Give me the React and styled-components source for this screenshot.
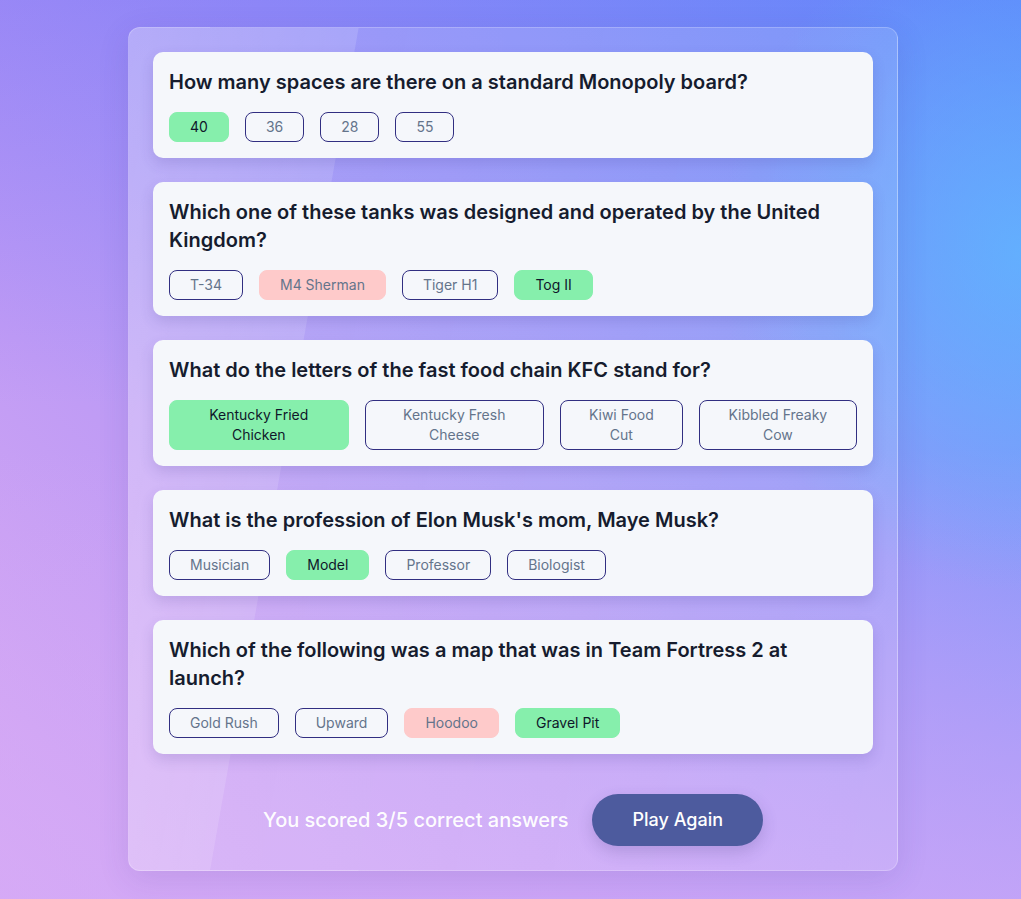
import React from "react";
import styled, { createGlobalStyle } from "styled-components";

const GlobalStyle = createGlobalStyle`
  html, body {
    margin: 0;
    padding: 0;
    min-height: 100%;
  }
  body {
    font-family: Inter, "Noto Sans", "Liberation Sans", sans-serif;
    min-height: 899px;
    background:
      radial-gradient(ellipse 300px 340px at 100% 28%, rgba(96, 182, 255, 0.8), rgba(96, 182, 255, 0) 100%),
      linear-gradient(180deg, rgba(210, 170, 248, 0) 50%, rgba(210, 170, 248, 0.65) 100%),
      linear-gradient(180deg, rgba(110, 96, 245, 0.3) 0%, rgba(110, 96, 245, 0) 45%),
      linear-gradient(45deg, #dcaaf2 0%, #c09cf5 30%, #9a96f8 60%, #5a98fd 100%);
  }
  * { box-sizing: border-box; }
`;

const Page = styled.main`
  display: flex;
  justify-content: center;
  padding: 27px 0 28px 5px;
`;

const Panel = styled.section`
  width: 770px;
  padding: 24px;
  border-radius: 12px;
  border: 1px solid rgba(255, 255, 255, 0.22);
  background: linear-gradient(
    100deg,
    rgba(255, 255, 255, 0.3) 0%,
    rgba(255, 255, 255, 0.26) 25%,
    rgba(255, 255, 255, 0.15) 25.1%,
    rgba(255, 255, 255, 0.12) 100%
  );
  box-shadow: 0 8px 32px rgba(60, 40, 140, 0.12);
  display: flex;
  flex-direction: column;
  gap: 24px;
`;

const Card = styled.article`
  background: #f5f7fb;
  border-radius: 10px;
  padding: 16px;
  box-shadow: 0 6px 14px rgba(60, 50, 140, 0.16);
  display: flex;
  flex-direction: column;
  gap: 16px;
`;

const Question = styled.h2`
  margin: 0;
  font-size: 20px;
  line-height: 28px;
  font-weight: 600;
  color: #161c2e;
`;

const Answers = styled.div`
  display: flex;
  gap: 16px;
  align-items: stretch;
`;

const Answer = styled.button`
  font-family: inherit;
  font-size: 14px;
  line-height: 20px;
  padding: 4px 20px;
  border-radius: 8px;
  text-align: center;
  cursor: pointer;
  border: 1px solid
    ${(p) =>
      p.$state === "correct" ? "#86efac" : p.$state === "wrong" ? "#fecaca" : "#312e81"};
  background: ${(p) =>
    p.$state === "correct" ? "#86efac" : p.$state === "wrong" ? "#fecaca" : "transparent"};
  color: ${(p) => (p.$state === "correct" ? "#0f172a" : "#64748b")};
`;

const Footer = styled.footer`
  display: flex;
  justify-content: center;
  align-items: center;
  gap: 24px;
  margin-top: 16px;
`;

const Score = styled.p`
  margin: 0;
  color: rgba(255, 255, 255, 0.97);
  font-size: 20px;
  font-weight: 500;
`;

const PlayButton = styled.button`
  font-family: inherit;
  font-size: 18px;
  line-height: 24px;
  font-weight: 500;
  color: #ffffff;
  background: #4d5b9e;
  border: none;
  border-radius: 26px;
  padding: 14px 40px;
  cursor: pointer;
  box-shadow: 0 6px 16px rgba(60, 50, 120, 0.2);
`;

const questions = [
  {
    q: "How many spaces are there on a standard Monopoly board?",
    a: ["40", "36", "28", "55"],
    correct: "40",
    picked: "40",
  },
  {
    q: "Which one of these tanks was designed and operated by the United Kingdom?",
    a: ["T-34", "M4 Sherman", "Tiger H1", "Tog II"],
    correct: "Tog II",
    picked: "M4 Sherman",
  },
  {
    q: "What do the letters of the fast food chain KFC stand for?",
    a: ["Kentucky Fried Chicken", "Kentucky Fresh Cheese", "Kiwi Food Cut", "Kibbled Freaky Cow"],
    correct: "Kentucky Fried Chicken",
    picked: "Kentucky Fried Chicken",
  },
  {
    q: "What is the profession of Elon Musk's mom, Maye Musk?",
    a: ["Musician", "Model", "Professor", "Biologist"],
    correct: "Model",
    picked: "Model",
  },
  {
    q: "Which of the following was a map that was in Team Fortress 2 at launch?",
    a: ["Gold Rush", "Upward", "Hoodoo", "Gravel Pit"],
    correct: "Gravel Pit",
    picked: "Hoodoo",
  },
];

export default function App() {
  return (
    <>
      <GlobalStyle />
      <Page>
        <Panel>
          {questions.map((item) => (
            <Card key={item.q}>
              <Question>{item.q}</Question>
              <Answers>
                {item.a.map((ans) => {
                  const state =
                    ans === item.correct ? "correct" : ans === item.picked ? "wrong" : "idle";
                  return (
                    <Answer key={ans} $state={state}>
                      {ans}
                    </Answer>
                  );
                })}
              </Answers>
            </Card>
          ))}
          <Footer>
            <Score>You scored 3/5 correct answers</Score>
            <PlayButton>Play Again</PlayButton>
          </Footer>
        </Panel>
      </Page>
    </>
  );
}
